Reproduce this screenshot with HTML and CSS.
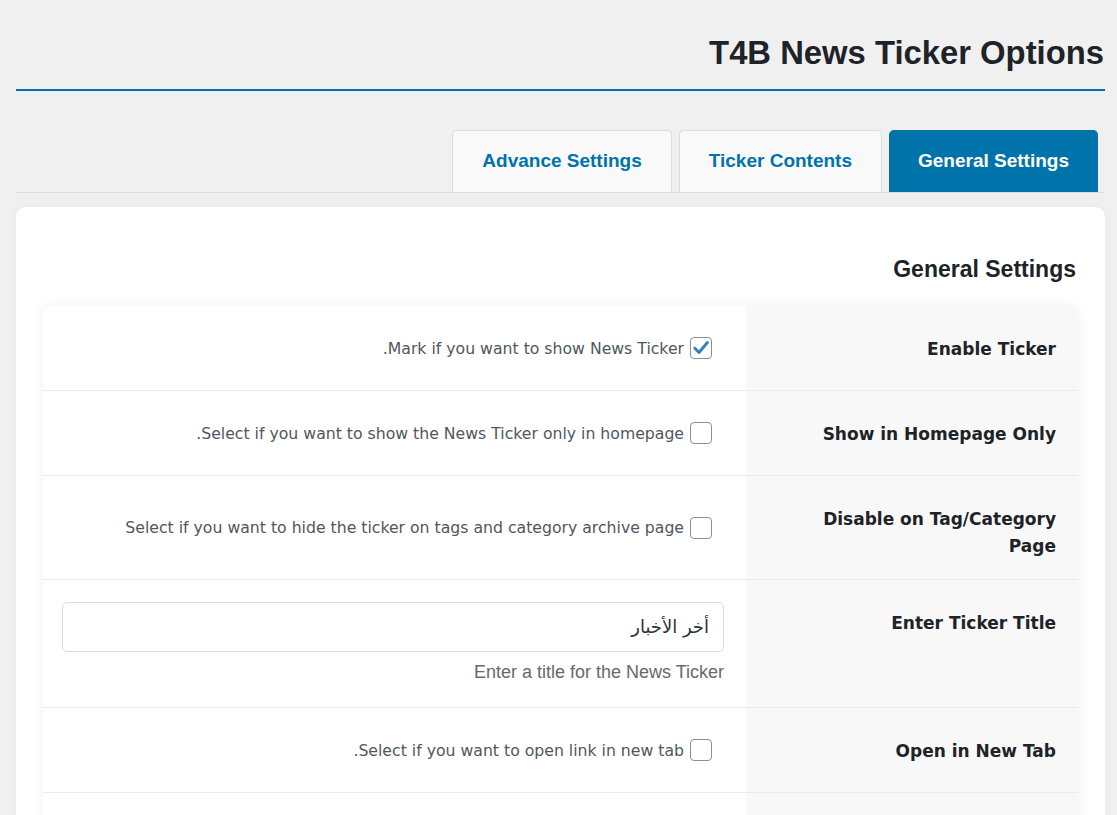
FILE: index.html
```html
<!DOCTYPE html>
<html dir="rtl" lang="ar">
<head>
<meta charset="utf-8">
<title>T4B News Ticker Options</title>
<link rel="stylesheet" href="styles.css">
</head>
<body>
<div class="wrap">
  <h1 class="page-title">T4B News Ticker Options</h1>
  <nav class="tabs">
    <a class="tab active">General Settings</a>
    <a class="tab">Ticker Contents</a>
    <a class="tab">Advance Settings</a>
  </nav>
  <section class="card">
    <h2 class="card-title">General Settings</h2>
    <table class="form-table">
      <tr>
        <th>Enable Ticker</th>
        <td>
          <label class="check-line">
            <span class="cb checked"><svg viewBox="0 0 20 20" width="20" height="20"><path d="M3.8 10.2 L8 14.4 L16.4 4.6" fill="none" stroke="#3582c4" stroke-width="3" stroke-linecap="round" stroke-linejoin="round"/></svg></span>
            <span class="desc">Mark if you want to show News Ticker.</span>
          </label>
        </td>
      </tr>
      <tr>
        <th>Show in Homepage Only</th>
        <td>
          <label class="check-line">
            <span class="cb"></span>
            <span class="desc">Select if you want to show the News Ticker only in homepage.</span>
          </label>
        </td>
      </tr>
      <tr>
        <th>Disable on Tag/Category Page</th>
        <td class="mid">
          <label class="check-line">
            <span class="cb"></span>
            <span class="desc">Select if you want to hide the ticker on tags and category archive page</span>
          </label>
        </td>
      </tr>
      <tr>
        <th>Enter Ticker Title</th>
        <td class="input-cell">
          <div class="text-input">أخر الأخبار</div>
          <p class="help">Enter a title for the News Ticker</p>
        </td>
      </tr>
      <tr>
        <th>Open in New Tab</th>
        <td>
          <label class="check-line">
            <span class="cb"></span>
            <span class="desc">Select if you want to open link in new tab.</span>
          </label>
        </td>
      </tr>
      <tr class="more-row">
        <th></th>
        <td></td>
      </tr>
    </table>
  </section>
</div>
</body>
</html>
```
FILE: styles.css
```css
html, body {
  margin: 0;
  padding: 0;
  background: #f0f0f0;
}
body {
  font-family: "DejaVu Sans", sans-serif;
  color: #1d2327;
  overflow: hidden;
}
.wrap {
  margin: 0 12px 0 16px;
}
.page-title {
  margin: 0;
  padding: 33px 1px 16px 0;
  font-family: "Liberation Sans", Arial, sans-serif;
  font-weight: 700;
  font-size: 32.8px;
  line-height: 40px;
  color: #1d2327;
  border-bottom: 2px solid #0073aa;
}
.tabs {
  display: flex;
  gap: 7px;
  margin-top: 39px;
  padding-right: 7px;
  border-bottom: 1px solid #dcdcdc;
}
.tab {
  display: block;
  box-sizing: border-box;
  height: 62px;
  line-height: 60px;
  padding: 0 29px;
  background: #f9f9f9;
  border: 1px solid #dcdcdc;
  border-bottom: none;
  border-radius: 5px 5px 0 0;
  font-family: "Liberation Sans", Arial, sans-serif;
  font-weight: 700;
  font-size: 19px;
  color: #0073aa;
  text-decoration: none;
}
.tab.active {
  padding: 0 28px;
  background: #0073aa;
  border-color: #0073aa;
  color: #ffffff;
}
.card {
  margin-top: 14px;
  background: #ffffff;
  border-radius: 10px;
  padding: 20px 27px 40px;
  box-shadow: 0 0 10px rgba(0, 0, 0, 0.04);
}
.card-title {
  margin: 27px 2px 22px 0;
  font-family: "Liberation Sans", Arial, sans-serif;
  font-weight: 700;
  font-size: 23px;
  line-height: 30px;
  color: #1d2327;
}
.form-table {
  width: 100%;
  border-collapse: separate;
  border-spacing: 0;
  border-radius: 8px;
  overflow: hidden;
  box-shadow: 0 0 14px rgba(0, 0, 0, 0.06);
}
.form-table th {
  width: 260px;
  padding: 30px 22px 19px 50px;
  background: #f8f8f8;
  text-align: right;
  vertical-align: top;
  font-weight: 700;
  font-size: 17px;
  line-height: 27px;
  color: #1d2327;
  border-bottom: 1px solid #ebebeb;
}
.form-table td {
  padding: 22px 22px 22px 19px;
  vertical-align: top;
  border-bottom: 1px solid #ebebeb;
}
.form-table td.mid {
  vertical-align: middle;
}
.more-row th,
.more-row td {
  height: 40px;
}
.check-line {
  display: flex;
  align-items: center;
  gap: 6px;
  height: 40px;
  padding-right: 12px;
}
.cb {
  box-sizing: border-box;
  width: 22px;
  height: 22px;
  flex: none;
  border: 1px solid #8c8f94;
  border-radius: 4px;
  background: #fff;
  display: flex;
  align-items: center;
  justify-content: center;
}
.desc {
  font-size: 15.7px;
  color: #50575e;
  white-space: nowrap;
}
.text-input {
  box-sizing: border-box;
  height: 50px;
  border: 1px solid #dcdcdc;
  border-radius: 5px;
  padding: 0 14px;
  line-height: 48px;
  font-family: "DejaVu Sans", sans-serif;
  font-size: 18px;
  color: #2c3338;
  background: #fff;
}
.help {
  margin: 7px 0 0;
  font-family: "Liberation Sans", Arial, sans-serif;
  font-size: 18px;
  line-height: 26px;
  color: #646970;
}
```
